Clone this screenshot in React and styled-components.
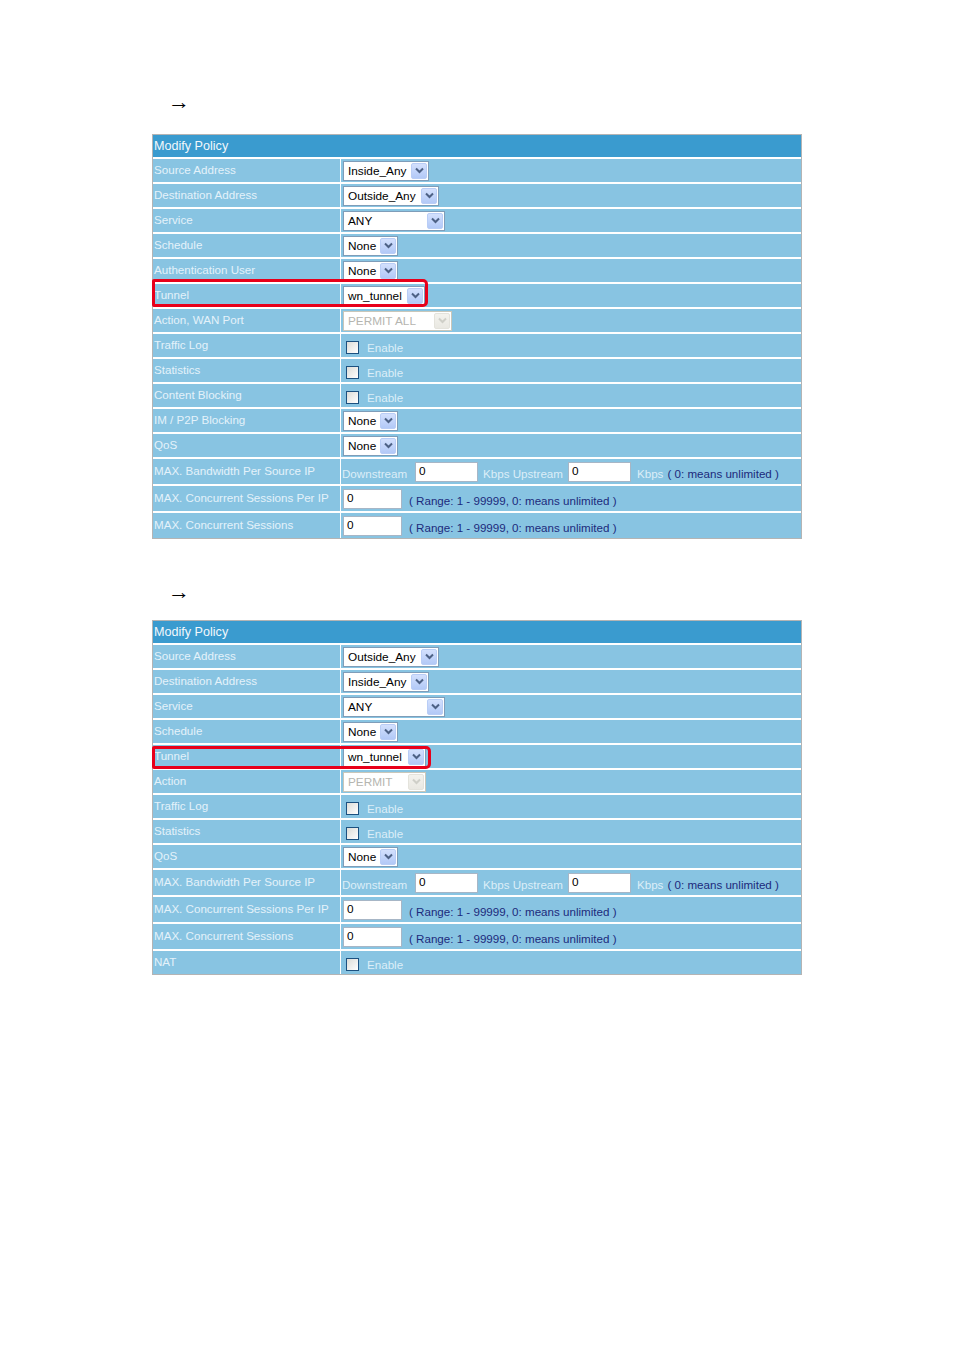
import React from 'react';
import styled, { createGlobalStyle } from 'styled-components';

const GlobalStyle = createGlobalStyle`
    body {
        margin: 0;
        background: #ffffff;
        font-family: 'Liberation Sans', Arial, sans-serif;
    }
`;

const Page = styled.div`
    width: 954px;
    min-height: 1350px;
    padding-left: 152px;
    box-sizing: border-box;
`;

const Section = styled.section`
    padding-top: ${p => p.top}px;
`;

const Arrow = styled.div`
    height: 20px;
    line-height: 20px;
    padding-left: 16px;
    margin-bottom: ${p => p.gap}px;
    font-family: 'Liberation Sans', sans-serif;
    font-size: 22px;
    color: #000;
`;

const Table = styled.div`
    width: 650px;
    box-sizing: border-box;
    border: 1px solid #b4b4b4;
    background: #ffffff;
    display: flex;
    flex-direction: column;
    gap: 2px;
`;

const Header = styled.div`
    height: 22px;
    line-height: 22px;
    background: #3a9bcf;
    color: #f2f8fc;
    font-size: 12.6px;
    padding-left: 1px;
`;

const Row = styled.div`
    position: relative;
    display: grid;
    grid-template-columns: 187px 1fr;
    column-gap: 1px;
    height: ${p => (p.tall ? 25 : 23)}px;
`;

const Label = styled.div`
    background: #88c4e2;
    color: #e4f2fa;
    font-size: 11.6px;
    line-height: ${p => (p.tall ? 23 : 21)}px;
    padding-left: 1px;
    white-space: nowrap;
`;

const Value = styled.div`
    background: #88c4e2;
    display: flex;
    align-items: center;
    padding-left: 1px;
    font-size: 11.6px;
    white-space: nowrap;
`;

const Highlight = styled.div`
    position: absolute;
    left: -1px;
    top: ${p => p.top}px;
    width: ${p => p.width}px;
    height: ${p => p.height}px;
    box-sizing: border-box;
    border: 3px solid #e8001a;
    border-radius: 2px 5px 5px 2px;
    pointer-events: none;
`;

const SelectBox = styled.div`
    display: inline-flex;
    align-items: center;
    justify-content: space-between;
    width: ${p => p.width}px;
    height: 20px;
    box-sizing: border-box;
    border: 1px solid ${p => (p.disabled ? '#c9c7ba' : '#7f9db9')};
    background: #ffffff;
    margin-left: 1px;
    padding: 0 1px 0 4px;
    color: ${p => (p.disabled ? '#b5b5b0' : '#000')};
    font-size: 11.8px;
`;

const DropButton = styled.span`
    width: 16px;
    height: 16px;
    box-sizing: border-box;
    border: 1px solid ${p => (p.disabled ? '#e4e3dc' : '#b9cdf6')};
    border-radius: 2px;
    background: ${p => (p.disabled
        ? 'linear-gradient(#f4f3ee, #e9e8e2)'
        : 'linear-gradient(#d3e0fd, #b2c9f7)')};
    display: flex;
    align-items: center;
    justify-content: center;
`;

const Check = styled.span`
    width: 13px;
    height: 13px;
    box-sizing: border-box;
    border: 1px solid #1c5180;
    background: linear-gradient(135deg, #dcdcd7, #ffffff);
    margin: 3px 8px 0 4px;
`;

const Light = styled.span`
    color: #dceef8;
    margin: ${p => p.m || '0'};
    padding-top: 3px;
`;

const Navy = styled.span`
    color: #1c2a7c;
    margin-left: ${p => p.ml || 0}px;
    padding-top: 3px;
`;

const TextInput = styled.span`
    display: inline-block;
    width: ${p => p.width}px;
    height: 20px;
    box-sizing: border-box;
    border: 1px solid #a7b6c6;
    background: #fff;
    color: #000;
    font-size: 11.8px;
    line-height: 17px;
    padding-left: 3px;
    margin-left: ${p => p.ml || 0}px;
`;

const Chevron = ({ disabled }) => (
    <svg width="9" height="7" viewBox="0 0 9 7">
        <path d="M1 1.5 L4.5 5 L8 1.5" fill="none"
            stroke={disabled ? '#cfcfc8' : '#4d6185'} strokeWidth="2" />
    </svg>
);

const Select = ({ value, width, disabled }) => (
    <SelectBox width={width} disabled={disabled}>
        <span>{value}</span>
        <DropButton disabled={disabled}><Chevron disabled={disabled} /></DropButton>
    </SelectBox>
);

const CheckField = () => (
    <>
        <Check />
        <Light>Enable</Light>
    </>
);

const Bandwidth = () => (
    <>
        <Light>Downstream</Light>
        <TextInput width={63} ml={8}>0</TextInput>
        <Light m="0 5px 0 5px">Kbps Upstream</Light>
        <TextInput width={63}>0</TextInput>
        <Light m="0 0 0 6px">Kbps</Light>
        <Navy ml={4}>( 0: means unlimited )</Navy>
    </>
);

const Sessions = () => (
    <>
        <TextInput width={59} ml={1}>0</TextInput>
        <Navy ml={7}>( Range: 1 - 99999, 0: means unlimited )</Navy>
    </>
);

const policyOne = [
    { label: 'Source Address', field: <Select value="Inside_Any" width={86} /> },
    { label: 'Destination Address', field: <Select value="Outside_Any" width={96} /> },
    { label: 'Service', field: <Select value="ANY" width={102} /> },
    { label: 'Schedule', field: <Select value="None" width={55} /> },
    { label: 'Authentication User', field: <Select value="None" width={55} /> },
    { label: 'Tunnel', field: <Select value="wn_tunnel" width={82} />, mark: { top: -5, width: 276, height: 28 } },
    { label: 'Action, WAN Port', field: <Select value="PERMIT ALL" width={109} disabled /> },
    { label: 'Traffic Log', field: <CheckField /> },
    { label: 'Statistics', field: <CheckField /> },
    { label: 'Content Blocking', field: <CheckField /> },
    { label: 'IM / P2P Blocking', field: <Select value="None" width={55} /> },
    { label: 'QoS', field: <Select value="None" width={55} /> },
    { label: 'MAX. Bandwidth Per Source IP', field: <Bandwidth />, tall: true },
    { label: 'MAX. Concurrent Sessions Per IP', field: <Sessions />, tall: true },
    { label: 'MAX. Concurrent Sessions', field: <Sessions />, tall: true },
];

const policyTwo = [
    { label: 'Source Address', field: <Select value="Outside_Any" width={96} /> },
    { label: 'Destination Address', field: <Select value="Inside_Any" width={86} /> },
    { label: 'Service', field: <Select value="ANY" width={102} /> },
    { label: 'Schedule', field: <Select value="None" width={55} /> },
    { label: 'Tunnel', field: <Select value="wn_tunnel" width={83} />, mark: { top: 1, width: 279, height: 23 } },
    { label: 'Action', field: <Select value="PERMIT" width={83} disabled /> },
    { label: 'Traffic Log', field: <CheckField /> },
    { label: 'Statistics', field: <CheckField /> },
    { label: 'QoS', field: <Select value="None" width={55} /> },
    { label: 'MAX. Bandwidth Per Source IP', field: <Bandwidth />, tall: true },
    { label: 'MAX. Concurrent Sessions Per IP', field: <Sessions />, tall: true },
    { label: 'MAX. Concurrent Sessions', field: <Sessions />, tall: true },
    { label: 'NAT', field: <CheckField /> },
];

const PolicyTable = ({ rows }) => (
    <Table>
        <Header>Modify Policy</Header>
        {rows.map(r => (
            <Row key={r.label} tall={r.tall}>
                <Label tall={r.tall}>{r.label}</Label>
                <Value>{r.field}</Value>
                {r.mark && <Highlight {...r.mark} />}
            </Row>
        ))}
    </Table>
);

const App = () => (
    <Page>
        <GlobalStyle />
        <Section top={92}>
            <Arrow gap={22}>→</Arrow>
            <PolicyTable rows={policyOne} />
        </Section>
        <Section top={43}>
            <Arrow gap={18}>→</Arrow>
            <PolicyTable rows={policyTwo} />
        </Section>
    </Page>
);

export default App;
